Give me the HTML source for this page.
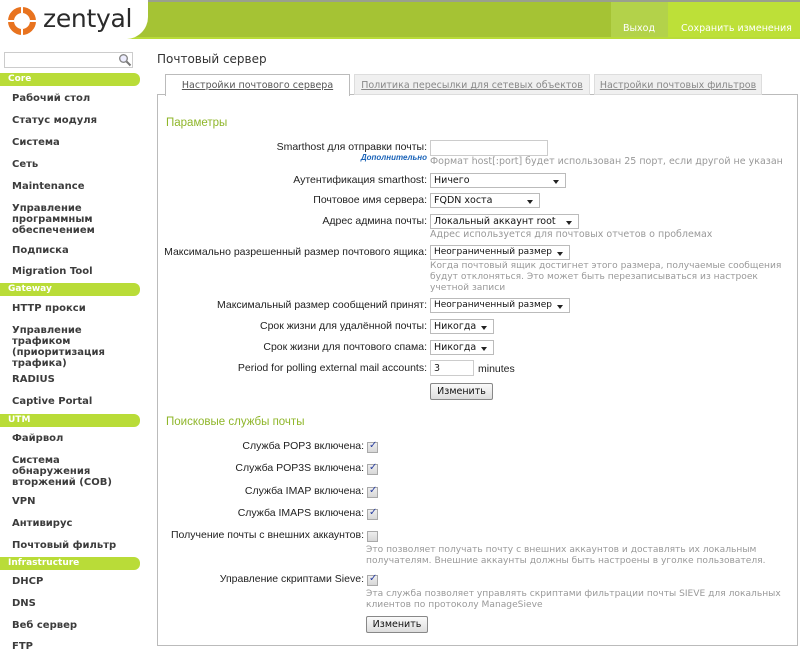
<!DOCTYPE html>
<html><head><meta charset="utf-8"><style>
*{margin:0;padding:0;box-sizing:border-box}
body{width:800px;height:647px;overflow:hidden;position:relative;background:#fff;font-family:"Liberation Sans","DejaVu Sans",sans-serif;font-size:10.5px;color:#222}
.a{position:absolute;white-space:nowrap}
#hdr{position:absolute;left:0;top:0;width:800px;height:39px;background:#a5c334;border-top:2px solid #9aa08e;border-bottom:2px solid #b9dc38}
#logo{position:absolute;left:0;top:0;width:148px;height:39px;background:#fff;border-bottom-right-radius:22px}
.nav{font-family:"DejaVu Sans",sans-serif;font-size:10px;font-weight:bold;color:#3c3c3c}
.sec{position:absolute;left:0;width:140px;height:13px;background:#b9dc38;border-radius:0 6px 6px 0;color:#fff;font-family:"DejaVu Sans",sans-serif;font-weight:bold;font-size:9px;padding-left:8px;line-height:13px}
.lab{position:absolute;right:373px;text-align:right;white-space:nowrap;font-size:10.5px;color:#222}
.lab2{position:absolute;right:436px;text-align:right;white-space:nowrap;font-size:10.5px;color:#222}
.hint{position:absolute;font-family:"DejaVu Sans",sans-serif;font-size:9.5px;color:#999;line-height:11px;white-space:nowrap}
.hint.s{font-size:9.1px}
.sel{position:absolute;height:15px;border:1px solid #bbb;background:#fff;font-family:"DejaVu Sans",sans-serif;font-size:9.5px;line-height:13px;padding-left:3px;color:#111;white-space:nowrap}
.sel:after{content:"";position:absolute;right:6px;top:6px;border-left:3px solid transparent;border-right:3px solid transparent;border-top:4px solid #222}
.cb{position:absolute;width:11px;height:11px;border:1px solid #a9a9a9;background:linear-gradient(#eee,#d7d7d7);left:367px}
.cb.c:after{content:"✓";position:absolute;left:1px;top:-3px;font-size:10px;color:#2a3fa0;font-weight:bold}
.btn{position:absolute;height:17px;border:1px solid #888;border-radius:2px;background:linear-gradient(#fafafa,#ddd);font-family:"DejaVu Sans",sans-serif;font-size:9.5px;text-align:center;line-height:15px;color:#111}
.tab{position:absolute;top:74px;height:21px;border:1px solid #ddd;background:#f0f0f0;font-family:"DejaVu Sans",sans-serif;font-size:9.5px;color:#888;text-decoration:underline;line-height:22px;text-align:center;white-space:nowrap}
</style></head><body>
<div id="hdr"></div>
<div id="logo">
<svg width="40" height="34" style="position:absolute;left:6px;top:5px" viewBox="0 0 40 34">
<circle cx="16" cy="16" r="11" fill="none" stroke="#e8731f" stroke-width="6"/>
<line x1="16" y1="2" x2="16" y2="8" stroke="#fff" stroke-width="2"/>
<line x1="16" y1="24" x2="16" y2="30" stroke="#fff" stroke-width="2"/>
<line x1="2" y1="16" x2="8" y2="16" stroke="#fff" stroke-width="2"/>
<line x1="24" y1="16" x2="30" y2="16" stroke="#fff" stroke-width="2"/>
</svg>
<div class="a" style="left:43px;top:4px;font-family:'DejaVu Sans',sans-serif;font-size:25px;color:#2a2a2a;letter-spacing:-0.3px">zentyal</div>
</div>
<div class="a" style="left:611px;top:2px;width:57px;height:35px;background:#b3d24a"></div>
<div class="a" style="left:668px;top:2px;width:132px;height:35px;background:#bde038"></div>
<div class="a" style="left:623px;top:23px;color:#fff;font-family:'DejaVu Sans',sans-serif;font-size:9.5px">Выход</div>
<div class="a" style="left:681px;top:23px;color:#fff;font-family:'DejaVu Sans',sans-serif;font-size:9.5px">Сохранить изменения</div>

<div class="a" style="left:4px;top:52px;width:129px;height:16px;border:1px solid #ccc"></div>
<svg class="a" style="left:118px;top:53px" width="14" height="14" viewBox="0 0 14 14"><circle cx="5.5" cy="5.5" r="3.8" fill="#eef" stroke="#888" stroke-width="1.4"/><line x1="8.5" y1="8.5" x2="12.5" y2="12.5" stroke="#777" stroke-width="2"/></svg>

<div class="sec" style="top:73px">Core</div>
<div class="a nav" style="left:12px;top:93px">Рабочий стол</div>
<div class="a nav" style="left:12px;top:115px">Статус модуля</div>
<div class="a nav" style="left:12px;top:137px">Система</div>
<div class="a nav" style="left:12px;top:159px">Сеть</div>
<div class="a nav" style="left:12px;top:181px">Maintenance</div>
<div class="a nav" style="left:12px;top:203px;line-height:11px">Управление<br>программным<br>обеспечением</div>
<div class="a nav" style="left:12px;top:245px">Подписка</div>
<div class="a nav" style="left:12px;top:266px">Migration Tool</div>
<div class="sec" style="top:283px">Gateway</div>
<div class="a nav" style="left:12px;top:303px">HTTP прокси</div>
<div class="a nav" style="left:12px;top:325px;line-height:11px">Управление<br>трафиком<br>(приоритизация<br>трафика)</div>
<div class="a nav" style="left:12px;top:374px">RADIUS</div>
<div class="a nav" style="left:12px;top:396px">Captive Portal</div>
<div class="sec" style="top:414px">UTM</div>
<div class="a nav" style="left:12px;top:433px">Файрвол</div>
<div class="a nav" style="left:12px;top:455px;line-height:11px">Система<br>обнаружения<br>вторжений (СОВ)</div>
<div class="a nav" style="left:12px;top:496px">VPN</div>
<div class="a nav" style="left:12px;top:518px">Антивирус</div>
<div class="a nav" style="left:12px;top:540px">Почтовый фильтр</div>
<div class="sec" style="top:557px">Infrastructure</div>
<div class="a nav" style="left:12px;top:576px">DHCP</div>
<div class="a nav" style="left:12px;top:598px">DNS</div>
<div class="a nav" style="left:12px;top:620px">Веб сервер</div>
<div class="a nav" style="left:12px;top:641px">FTP</div>

<div class="a" style="left:157px;top:52px;font-family:'DejaVu Sans',sans-serif;font-size:12px;color:#333">Почтовый сервер</div>
<div class="a" style="left:157px;top:94px;width:641px;height:552px;border:1px solid #bbb"></div>
<div class="tab" style="left:165px;width:185px;height:22px;background:#fff;border-color:#bbb;border-bottom:none;color:#555">Настройки почтового сервера</div>
<div class="tab" style="left:354px;width:236px">Политика пересылки для сетевых объектов</div>
<div class="tab" style="left:594px;width:168px">Настройки почтовых фильтров</div>

<div class="a" style="left:166px;top:117px;color:#8fb62a;font-size:11.5px">Параметры</div>
<div class="lab" style="top:141px">Smarthost для отправки почты:</div>
<div class="a" style="right:373px;top:153px;font-size:8px;color:#1a63b8;font-style:italic;font-weight:bold">Дополнительно</div>
<div class="a" style="left:430px;top:140px;width:118px;height:16px;border:1px solid #ccc"></div>
<div class="hint" style="left:430px;top:156px">Формат host[:port] будет использован 25 порт, если другой не указан</div>
<div class="lab" style="top:174px">Аутентификация smarthost:</div>
<div class="sel" style="left:430px;top:173px;width:136px">Ничего</div>
<div class="lab" style="top:194px">Почтовое имя сервера:</div>
<div class="sel" style="left:430px;top:193px;width:110px">FQDN хоста</div>
<div class="lab" style="top:215px">Адрес админа почты:</div>
<div class="sel" style="left:430px;top:214px;width:149px">Локальный аккаунт root</div>
<div class="hint" style="left:430px;top:229px">Адрес используется для почтовых отчетов о проблемах</div>
<div class="lab" style="top:246px">Максимально разрешенный размер почтового ящика:</div>
<div class="sel" style="left:430px;top:245px;width:140px;font-size:9px">Неограниченный размер</div>
<div class="hint s" style="left:430px;top:261px">Когда почтовый ящик достигнет этого размера, получаемые сообщения<br>будут отклоняться. Это может быть перезаписываться из настроек<br>учетной записи</div>
<div class="lab" style="top:299px">Максимальный размер сообщений принят:</div>
<div class="sel" style="left:430px;top:298px;width:140px;font-size:9px">Неограниченный размер</div>
<div class="lab" style="top:320px">Срок жизни для удалённой почты:</div>
<div class="sel" style="left:430px;top:319px;width:64px">Никогда</div>
<div class="lab" style="top:341px">Срок жизни для почтового спама:</div>
<div class="sel" style="left:430px;top:340px;width:64px">Никогда</div>
<div class="lab" style="top:362px">Period for polling external mail accounts:</div>
<div class="a" style="left:430px;top:360px;width:44px;height:16px;border:1px solid #ccc;font-family:'DejaVu Sans',sans-serif;font-size:9.5px;padding:2px 3px">3</div>
<div class="a" style="left:478px;top:363px">minutes</div>
<div class="btn" style="left:430px;top:383px;width:63px">Изменить</div>

<div class="a" style="left:166px;top:416px;color:#8fb62a;font-size:11.5px">Поисковые службы почты</div>
<div class="lab2" style="top:440px">Служба POP3 включена:</div><div class="cb c" style="top:442px"></div>
<div class="lab2" style="top:462px">Служба POP3S включена:</div><div class="cb c" style="top:464px"></div>
<div class="lab2" style="top:485px">Служба IMAP включена:</div><div class="cb c" style="top:487px"></div>
<div class="lab2" style="top:507px">Служба IMAPS включена:</div><div class="cb c" style="top:509px"></div>
<div class="lab2" style="top:529px">Получение почты с внешних аккаунтов:</div><div class="cb" style="top:531px"></div>
<div class="hint s" style="left:366px;top:545px">Это позволяет получать почту с внешних аккаунтов и доставлять их локальным<br>получателям. Внешние аккаунты должны быть настроены в уголке пользователя.</div>
<div class="lab2" style="top:573px">Управление скриптами Sieve:</div><div class="cb c" style="top:575px"></div>
<div class="hint s" style="left:366px;top:589px">Эта служба позволяет управлять скриптами фильтрации почты SIEVE для локальных<br>клиентов по протоколу ManageSieve</div>
<div class="btn" style="left:366px;top:616px;width:62px">Изменить</div>
</body></html>
